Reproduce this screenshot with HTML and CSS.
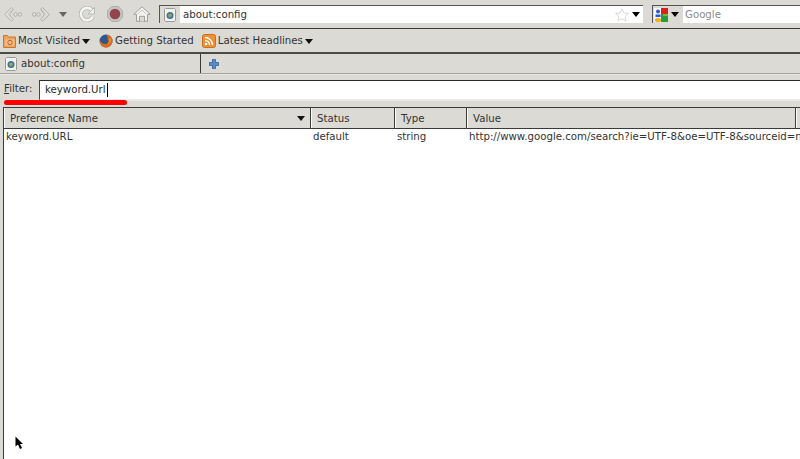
FILE: index.html
```html
<!DOCTYPE html>
<html lang="en">
<head>
<meta charset="utf-8">
<title>about:config</title>
<link rel="stylesheet" href="styles.css">
</head>
<body>
<div class="window">
  <div class="nav">
    <svg class="ic back" viewBox="0 0 18 15" width="18" height="15"><path d="M7.500.500 .800 7.500l6.700 6.700 1.800-1.700-3.300-4.200V6.700l3.300-4.400z" fill="#e2e2de" stroke="#b2b2ae"/><path d="M9 1.500 4 7.500l5 5" fill="none" stroke="#c8c8c4"/><circle cx="11.500" cy="7.500" r="1.700" fill="#e6e6e2" stroke="#aaaaa6"/><circle cx="15.800" cy="7.500" r="1.700" fill="#e6e6e2" stroke="#aaaaa6"/></svg>
    <svg class="ic fwd" viewBox="0 0 18 15" width="18" height="15"><path d="M10.500.500l6.700 7-6.700 6.700-1.800-1.700 3.300-4.200V6.700L8.700 2.300z" fill="#e2e2de" stroke="#a8a8a4"/><path d="M9 1.500l5 6-5 5" fill="none" stroke="#c8c8c4"/><circle cx="6.500" cy="7.500" r="1.700" fill="#e6e6e2" stroke="#aaaaa6"/><circle cx="2.200" cy="7.500" r="1.700" fill="#e6e6e2" stroke="#aaaaa6"/></svg>
    <span class="tri small"></span>
    <svg class="ic reload" viewBox="0 0 16 16" width="16" height="16"><path d="M13 4.300A6.200 6.200 0 1 0 13.800 10.500" fill="none" stroke="#b0b0ac" stroke-width="4"/><path d="M13 4.300A6.200 6.200 0 1 0 13.800 10.500" fill="none" stroke="#f4f4f2" stroke-width="2.600"/><path d="M15.500 1.500v6.500H9z" fill="#f0f0ee" stroke="#b0b0ac" stroke-width=".8"/></svg>
    <svg class="ic stop" viewBox="0 0 16 16" width="16" height="16"><path d="M4.700.500h6.600l4.200 4.200v6.600l-4.200 4.200H4.700L.500 11.300V4.700z" fill="#c4c4c0" stroke="#aeaeaa"/><circle cx="8" cy="8" r="5.300" fill="#93444c"/></svg>
    <svg class="ic home" viewBox="0 0 18 16" width="18" height="16"><path d="M9 .800.800 8.300h2.700v7h11v-7h2.700z" fill="#f2f2f0" stroke="#9e9e9a"/><path d="M6.500 15.300v-5h5v5" fill="#dcdad5" stroke="#9e9e9a"/><path d="M5 8 9 4l4 4" fill="none" stroke="#c4c4c0"/></svg>
    <div class="urlbar">
      <span class="favbox"><svg viewBox="0 0 12 14" width="12" height="14"><path d="M1.500.500h9l1 1v11l-1 1h-9l-1-1v-11z" fill="#f2f2ee" stroke="#9a9a96"/><circle cx="6" cy="7.500" r="3.500" fill="#44749c"/><path d="M4 6.500 7 5.500 8 8 5 9.500z" fill="#98b050"/></svg></span>
      <span class="urltext">about:config</span>
      <span class="spacer"></span>
      <svg class="star" viewBox="0 0 14 14" width="14" height="14"><path d="M7 .800 8.900 5l4.500.500-3.300 3 .9 4.500L7 10.800 3 13l.9-4.500-3.300-3L5.100 5z" fill="#fff" stroke="#d8d8d4"/></svg>
      <span class="tri"></span>
    </div>
    <div class="search">
      <span class="engine">
        <svg viewBox="0 0 14 14" width="14" height="14"><rect width="14" height="14" fill="#f4f6fa"/><rect x="7" width="7" height="6" fill="#d8201c"/><rect x="7" y="6" width="7" height="8" fill="#2a9a3a"/><path d="M9 6h5v2H9z" fill="#7ab83a"/><circle cx="4" cy="3.500" r="2" fill="#2a5ac8"/><path d="M1.500 6.500h5v2.500h-5z" fill="#2a5ac8"/><ellipse cx="4" cy="12" rx="3.200" ry="2" fill="#eeb020"/></svg>
        <span class="tri"></span>
      </span>
      <span class="placeholder">Google</span>
    </div>
  </div>
  <div class="bookmarks">
    <span class="bm first"><svg viewBox="0 0 13 14" width="13" height="14"><path d="M.5 1.500h4l1 1.500h7v10.500H.5z" fill="#eea45c" stroke="#c87830"/><path d="M2.500 5.500h9v6h-9z" fill="#f4bc88"/><circle cx="7" cy="8.500" r="2.200" fill="none" stroke="#c0602a"/></svg><span>Most Visited</span><span class="tri dark"></span></span>
    <span class="bm second"><svg viewBox="0 0 14 14" width="14" height="14"><circle cx="7" cy="7" r="6.500" fill="#2a5a90"/><path d="M7 .800c4 0 6.500 3 6.500 6.200S10.500 13.500 7 13.500 .800 10 1 6.500C2.500 9 4.500 10.500 7 10s3.500-3 1.500-4.500C9.500 4 8.500 2 7 .800z" fill="#e2681a"/><path d="M9 9.500c2-1 2.500-3 2-5" fill="none" stroke="#f4b030"/></svg><span>Getting Started</span></span>
    <span class="bm"><svg viewBox="0 0 14 14" width="14" height="14"><rect x=".5" y=".5" width="13" height="13" rx="2" fill="#f09030" stroke="#c87020"/><circle cx="4" cy="10" r="1.300" fill="#fff"/><path d="M3 6.500A4.500 4.500 0 0 1 7.500 11M3 3.500A7.500 7.500 0 0 1 10.500 11" fill="none" stroke="#fff" stroke-width="1.500"/></svg><span>Latest Headlines</span><span class="tri dark"></span></span>
  </div>
  <div class="tabs">
    <div class="tab">
      <svg viewBox="0 0 12 14" width="12" height="14"><path d="M1.500.500h9l1 1v11l-1 1h-9l-1-1v-11z" fill="#f2f2ee" stroke="#9a9a96"/><circle cx="6" cy="7.500" r="3.500" fill="#44749c"/><path d="M4 6.500 7 5.500 8 8 5 9.500z" fill="#98b050"/></svg>
      <span>about:config</span>
    </div>
    <div class="newtab"><svg viewBox="0 0 10 10" width="10" height="10"><path d="M3.500.500h3v3h3v3h-3v3h-3v-3h-3v-3h3z" fill="#5a8ccc" stroke="#2f5f9f" stroke-width=".8"/></svg></div>
  </div>
  <div class="filterbar">
    <label class="filterlabel"><u>F</u>ilter:</label>
    <div class="filterinput">keyword.Url<span class="caret"></span></div>
  </div>
  <div class="tree">
    <div class="cols head">
      <div class="col c1"><span>Preference Name</span><span class="tri dark"></span></div>
      <div class="col c2">Status</div>
      <div class="col c3">Type</div>
      <div class="col c4">Value</div>
      <div class="col c5"></div>
    </div>
    <div class="cols row">
      <div class="cell c1">keyword.URL</div>
      <div class="cell c2">default</div>
      <div class="cell c3">string</div>
      <div class="cell c4">http://www.google.com/search?ie=UTF-8&amp;oe=UTF-8&amp;sourceid=n</div>
    </div>
  </div>
</div>
<div class="redmark"></div>
<svg class="pointer" viewBox="0 0 10 14" width="10" height="14"><path d="M.5.500v10l2.500-2 2 4.500 2-1-2-4H8z" fill="#000"/></svg>
</body>
</html>
```
FILE: styles.css
```css
* { box-sizing: border-box; }
html, body { margin: 0; padding: 0; height: 100%; overflow: hidden; }
body { background: #dcdad5; font: 10.2px/14px "DejaVu Sans", sans-serif; color: #333; }
.window { width: 800px; height: 459px; display: flex; flex-direction: column; }
.tri { display: inline-block; flex: none; width: 0; height: 0; border: 4px solid transparent; border-top: 5px solid #000; border-bottom: 0; }
.tri.small { border-top-color: #666; margin-left: 9px; }
.tri.dark { border-top-color: #111; }

.nav { height: 29px; border-bottom: 1px solid #3a3a38; display: flex; align-items: center; padding-left: 4px; flex: none; }
.ic { flex: none; }
.fwd { margin-left: 10px; }
.reload { margin-left: 12px; }
.stop { margin-left: 12px; }
.home { margin-left: 10px; }
.urlbar { margin-left: 8px; width: 484px; height: 18px; background: #fff; border-top: 1px solid #555; border-left: 1px solid #555; display: flex; align-items: center; }
.favbox { width: 20px; height: 17px; background: #dcdad5; display: flex; align-items: center; justify-content: center; flex: none; }
.urltext { margin-left: 3px; }
.spacer { flex: 1; }
.star { margin-right: 3px; }
.urlbar .tri { margin-right: 3px; }
.search { margin-left: 9px; flex: 1; height: 18px; background: #fff; border-top: 1px solid #555; border-left: 1px solid #555; display: flex; align-items: center; }
.engine { width: 30px; height: 17px; background: #dcdad5; display: flex; align-items: center; gap: 3px; padding-left: 1px; flex: none; }
.placeholder { margin-left: 2px; color: #8c8c8c; }

.bookmarks { height: 25px; border-bottom: 2px solid #4a4a48; display: flex; align-items: center; padding: 1px 0 0 3px; flex: none; }
.bm { display: flex; align-items: center; margin-right: 7px; white-space: nowrap; }
.bm svg { margin-right: 2px; }
.bm .tri { margin-left: 2px; }
.bm.first { margin-right: 9px; }
.bm.second { margin-right: 8px; }

.tabs { height: 20px; display: flex; flex: none; border-bottom: 1px solid #a5a39e; }
.tab { width: 201px; display: flex; align-items: center; gap: 4px; padding-left: 5px; border-right: 1px solid #3a3a38; }
.newtab { padding-left: 8px; display: flex; align-items: center; }

.filterbar { height: 33px; display: flex; padding: 5px 0 0 4px; flex: none; border-top: 1px solid #e8e6e2; }
.filterlabel { width: 35px; padding-top: 2px; }
.filterinput { flex: 1; height: 21px; background: #fff; border-top: 1px solid #2a2a2a; border-left: 1px solid #444; border-bottom: 2px solid #eceae6; padding: 2px 0 0 5px; display: flex; align-items: flex-start; white-space: nowrap; color: #2a2a2a; }
.caret { width: 1px; height: 14px; background: #000; margin-left: 1px; }

.tree { flex: 1; margin-left: 3px; background: #fff; border-left: 1px solid #3a3a38; border-top: 1px solid #3a3a38; overflow: hidden; }
.cols { display: flex; white-space: nowrap; }
.head { height: 21px; border-bottom: 1px solid #3a3a38; }
.col { background: #dcdad5; border-left: 1px solid #fff; border-right: 1px solid #3a3a38; padding: 4px 0 0 5px; display: flex; justify-content: space-between; flex: none; }
.col.c1 { padding-right: 5px; }
.col.c1 .tri { margin-top: 4px; }
.c1 { width: 307px; }
.c2 { width: 84px; }
.c3 { width: 72px; }
.c4 { width: 329px; }
.c5 { flex: 1 !important; width: auto; }
.row { height: 16px; }
.cell { padding: 1px 0 0 2px; flex: none; }

.redmark { position: absolute; left: 4px; top: 100px; width: 123px; height: 5px; background: #f00; border-radius: 3px; }
.pointer { position: absolute; left: 15px; top: 436px; }
```
